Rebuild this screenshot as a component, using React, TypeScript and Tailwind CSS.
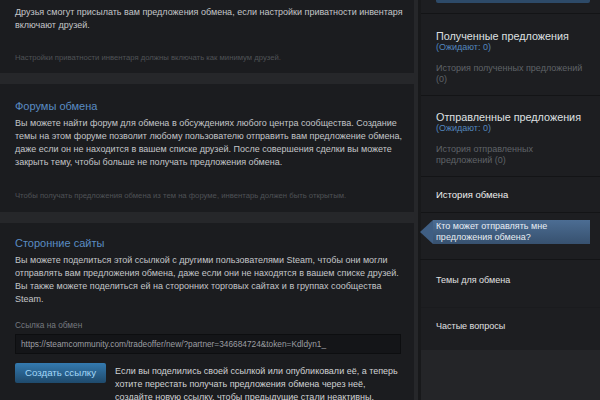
import React from "react";

const body = "text-[9px] leading-[13px] text-[#c4c6c9]";
const note = "text-[7.7px] leading-[11px] text-[#4f5256]";
const head = "text-[11px] leading-[14px] text-[#5a8cc3]";

function Panel({ className, children }: { className?: string; children: React.ReactNode }) {
  return <div className={`bg-[#1b1c1f] pl-[15px] pr-[6px] ${className ?? ""}`}>{children}</div>;
}

function SideSection({ title, history, top }: { title: string; history: string; top: string }) {
  return (
    <div className={`border-b border-[#131416] pl-[15px] pr-[4px] pb-[10px] ${top}`}>
      <div className="text-[10.8px] leading-[12px] text-[#dfe0e2] whitespace-nowrap">{title}</div>
      <div className="text-[9px] leading-[10px] text-[#5386bd]">(Ожидают: 0)</div>
      <div className="mt-[11px] pr-[6px] text-[9px] leading-[11px] text-[#5f6368]">{history}</div>
    </div>
  );
}

export default function App() {
  return (
    <div className="w-[600px] h-[400px] overflow-hidden flex bg-[#26272a] font-['Liberation_Sans',Arial,sans-serif]">
      <div className="w-[414px] flex flex-col gap-[11px] shrink-0">
        <Panel className="pt-[6px] pb-[10px]">
          <p className={body}>
            Друзья смогут присылать вам предложения обмена, если настройки приватности инвентаря
            <br />
            включают друзей.
          </p>
          <p className={`${note} mt-[20px]`}>Настройки приватности инвентаря должны включать как минимум друзей.</p>
        </Panel>

        <Panel className="pt-[15px] pb-[11px]">
          <h2 className={head}>Форумы обмена</h2>
          <p className={`${body} mt-[4px]`}>
            Вы можете найти форум для обмена в обсуждениях любого центра сообщества. Создание
            <br />
            темы на этом форуме позволит любому пользователю отправить вам предложение обмена,
            <br />
            даже если он не находится в вашем списке друзей. После совершения сделки вы можете
            <br />
            закрыть тему, чтобы больше не получать предложения обмена.
          </p>
          <p className={`${note} mt-[21px]`}>
            Чтобы получать предложения обмена из тем на форуме, инвентарь должен быть открытым.
          </p>
        </Panel>

        <Panel className="pt-[13px] flex-1">
          <h2 className={head}>Сторонние сайты</h2>
          <p className={`${body} mt-[4px]`}>
            Вы можете поделиться этой ссылкой с другими пользователями Steam, чтобы они могли
            <br />
            отправлять вам предложения обмена, даже если они не находятся в вашем списке друзей.
            <br />
            Вы также можете поделиться ей на сторонних торговых сайтах и в группах сообщества
            <br />
            Steam.
          </p>
          <div className="mt-[14px] text-[8.3px] leading-[11px] text-[#767a7f]">Ссылка на обмен</div>
          <div className="mt-[3px] mr-[7px] h-[20px] flex items-center bg-[#141518] border border-[#0d0e10] px-[5px] text-[8.3px] text-[#9c9ea2]">
            https://steamcommunity.com/tradeoffer/new/?partner=346684724&amp;token=Kdldyn1_
          </div>
          <div className="mt-[9px] flex gap-[9px]">
            <button
              type="button"
              className="w-[91px] h-[20px] shrink-0 rounded-[2px] bg-gradient-to-b from-[#347ab0] to-[#1f4a6c] text-[9.7px] text-[#a4d8f8]"
            >
              Создать ссылку
            </button>
            <p className={`${body} mt-[2px] text-[#d0d2d4]`}>
              Если вы поделились своей ссылкой или опубликовали её, а теперь
              <br />
              хотите перестать получать предложения обмена через неё,
              <br />
              создайте новую ссылку, чтобы предыдущие стали неактивны.
            </p>
          </div>
        </Panel>
      </div>

      <div className="w-[4px] bg-[#26272a]" />

      <div className="flex-1 border-l-[3px] border-[#18191b] bg-[#242528]">
        <div className="bg-[#1d1e21]">
          <div className="h-[14px] border-b border-[#131416] pl-[15px] pr-[10px]">
            <div className="h-[3px] rounded-b-[2px] bg-[#2d4a68]" />
          </div>
          <SideSection top="pt-[16px]" title="Полученные предложения" history="История полученных предложений (0)" />
          <SideSection top="pt-[15px]" title="Отправленные предложения" history="История отправленных предложений (0)" />
          <div className="border-b border-[#131416] pl-[15px] pt-[12px] pb-[12px] text-[9.5px] leading-[11px] text-[#eeeff0]">
            История обмена
          </div>
          <div className="border-b border-[#131416] pt-[7px] pb-[15px] flex items-stretch -ml-[1px] pr-[10px]">
            <div className="w-0 h-0 border-y-[12px] border-y-transparent border-r-[13px] border-r-[#3f5e83]" />
            <div className="flex-1 h-[24px] bg-gradient-to-b from-[#4c6d93] to-[#37516f] pl-[3px] flex items-center text-[9px] leading-[11px] text-[#e8eef4]">
              Кто может отправлять мне предложения обмена?
            </div>
          </div>
          <div className="border-b border-[#1a1b1e] pl-[15px] pt-[15px] pb-[21px] text-[9px] leading-[11px] text-[#e0e1e2]">
            Темы для обмена
          </div>
          <div className="pl-[15px] pt-[13px] pb-[18px] text-[9px] leading-[11px] text-[#e0e1e2]">
            Частые вопросы
          </div>
        </div>
      </div>
    </div>
  );
}
